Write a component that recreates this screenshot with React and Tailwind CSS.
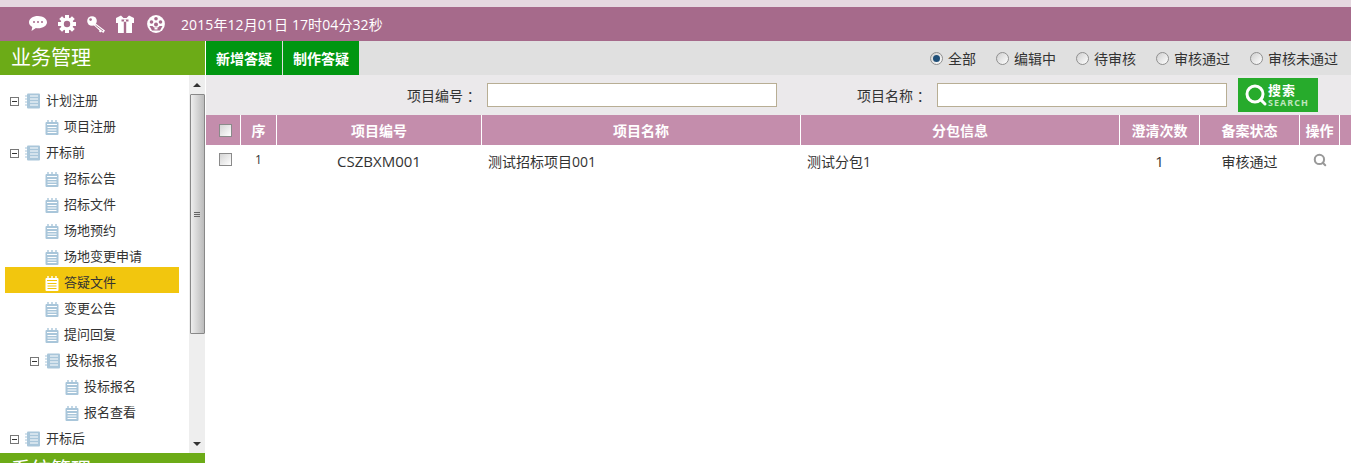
import React from 'react';
import { Search } from 'lucide-react';

const FONT = "font-['Open_Sans','Noto_Sans_CJK_SC',sans-serif]";

const treeItems = [
  { label: '计划注册', level: 0, folder: true },
  { label: '项目注册', level: 1 },
  { label: '开标前', level: 0, folder: true },
  { label: '招标公告', level: 1 },
  { label: '招标文件', level: 1 },
  { label: '场地预约', level: 1 },
  { label: '场地变更申请', level: 1 },
  { label: '答疑文件', level: 1, active: true },
  { label: '变更公告', level: 1 },
  { label: '提问回复', level: 1 },
  { label: '投标报名', level: 2, folder: true },
  { label: '投标报名', level: 3 },
  { label: '报名查看', level: 3 },
  { label: '开标后', level: 0, folder: true },
];

const radios = [
  { label: '全部', checked: true },
  { label: '编辑中' },
  { label: '待审核' },
  { label: '审核通过' },
  { label: '审核未通过' },
];

const ChatIcon = () => (
  <svg width="18" height="16" viewBox="0 0 18 16">
    <path fill="#fff" d="M9 0C4 0 0 2.700 0 6.200c0 2 1.300 3.700 3.300 4.800L2.500 15l4.400-3c.7.100 1.400.2 2.100.2 5 0 9-2.600 9-6S14 0 9 0z" />
    <circle cx="5" cy="6" r="1" fill="#a66a8b" />
    <circle cx="9" cy="6" r="1" fill="#a66a8b" />
    <circle cx="13" cy="6" r="1" fill="#a66a8b" />
  </svg>
);

const GearIcon = () => (
  <svg width="18" height="18" viewBox="0 0 18 18">
    <g fill="#fff">
      <rect x="7" y="0" width="4" height="18" />
      <rect x="7" y="0" width="4" height="18" transform="rotate(45 9 9)" />
      <rect x="7" y="0" width="4" height="18" transform="rotate(90 9 9)" />
      <rect x="7" y="0" width="4" height="18" transform="rotate(135 9 9)" />
      <circle cx="9" cy="9" r="6.500" />
    </g>
    <circle cx="9" cy="9" r="3.200" fill="#a66a8b" />
  </svg>
);

const KeyIcon = () => (
  <svg width="18" height="17" viewBox="0 0 18 17">
    <circle cx="5" cy="5" r="4.800" fill="#fff" />
    <circle cx="3.600" cy="3.600" r="1.300" fill="#a66a8b" />
    <path fill="#fff" d="M8 7l10 7.500-1.700 2.500-2-1.400-.9 1-1.400-1.100.5-1.100L6.500 9z" />
    <path stroke="#a66a8b" strokeWidth="0.900" d="M8.500 9.200l7.500 5.800" />
  </svg>
);

const GiftIcon = () => (
  <svg width="18" height="18" viewBox="0 0 18 18">
    <path fill="#fff" d="M0 3l5-2.500L7.500 3h3L13 .5 18 3v5h-2v10H2V8H0z" />
    <rect x="7.800" y="7" width="2.400" height="11" fill="#a66a8b" />
    <rect x="5.500" y="4.500" width="7" height="2" fill="#a66a8b" />
    <rect x="8" y="4.500" width="2" height="2" fill="#fff" />
  </svg>
);

const BuoyIcon = () => (
  <svg width="18" height="18" viewBox="0 0 18 18">
    <circle cx="9" cy="9" r="8.900" fill="#fff" />
    <circle cx="4.500" cy="7" r="1.800" fill="#a66a8b" />
    <circle cx="13.500" cy="7" r="1.800" fill="#a66a8b" />
    <circle cx="9" cy="3.700" r="1.800" fill="#a66a8b" />
    <circle cx="9" cy="9.500" r="2" fill="#a66a8b" />
    <path fill="#a66a8b" d="M2.500 11h3l1.500 1.500h4L12.500 11h3L13 15.500H5z" />
    <rect x="7.500" y="12.500" width="3" height="2" fill="#fff" />
  </svg>
);

const FolderIcon = () => (
  <svg width="16" height="16" viewBox="0 0 16 16" className="shrink-0">
    <rect x="2" y="0.500" width="13" height="15" rx="1" fill="#a9c6da" />
    <path d="M0 3h4M0 6h4M0 9h4M0 12h4" stroke="#a9c6da" strokeWidth="1" />
    <path d="M5 3h8M5 6h8M5 9h8M5 12h8" stroke="#fff" strokeWidth="1" />
  </svg>
);

const NoteIcon = ({ active }) => {
  const color = active ? '#fff' : '#a9c6da';
  const inner = active ? '#f2c60e' : '#fff';
  return (
    <svg width="14" height="15" viewBox="0 0 14 15" className="shrink-0">
      <rect x="0.500" y="2" width="13" height="13" rx="1" fill={color} />
      <path d="M3 0v3M7 0v3M11 0v3" stroke={color} strokeWidth="1.400" />
      <path d="M2 4.500h10" stroke={inner} strokeWidth="1" />
      <path d="M2.500 7.500h9M2.500 10h9M2.500 12.500h9" stroke={inner} strokeWidth="1" />
    </svg>
  );
};

const Toggle = () => (
  <span className="flex h-[9px] w-[9px] shrink-0 items-center justify-center border border-[#777] bg-white">
    <span className="h-px w-[5px] bg-[#333]" />
  </span>
);

const TreeRow = ({ item }) => {
  const indent = { 0: 'pl-[5px]', 1: 'pl-[40px]', 2: 'pl-[25px]', 3: 'pl-[60px]' }[item.level];
  return (
    <div className={`flex h-[26px] items-center pt-[6px] text-[13px] text-[#333] ${indent} ${item.active ? 'bg-[#f2c60e]' : ''}`}>
      {item.folder && <Toggle />}
      {item.folder ? <span className="ml-[6px]"><FolderIcon /></span> : <NoteIcon active={item.active} />}
      <span className="ml-[5px]">{item.label}</span>
    </div>
  );
};

const ScrollArrow = ({ up }) => (
  <div className="flex h-[19px] items-center justify-center">
    <div className={`h-0 w-0 border-x-[4px] border-x-transparent ${up ? 'border-b-[4px] border-b-[#333]' : 'border-t-[4px] border-t-[#333]'}`} />
  </div>
);

const Scrollbar = () => (
  <div className="flex h-full w-[16px] flex-col bg-[#eeeeee]">
    <ScrollArrow up />
    <div className="mx-auto flex h-[240px] w-[15px] items-center justify-center rounded-[1px] border border-[#888] bg-gradient-to-r from-[#eeeeee] to-[#bbbbbb]">
      <div className="flex flex-col gap-px">
        <div className="h-px w-[6px] bg-[#666]" />
        <div className="h-px w-[6px] bg-[#666]" />
        <div className="h-px w-[6px] bg-[#666]" />
      </div>
    </div>
    <div className="flex-1" />
    <ScrollArrow />
  </div>
);

const Checkbox = () => (
  <span className="block h-[13px] w-[13px] border border-[#8a8a8a] bg-gradient-to-br from-[#d4d4d4] to-white" />
);

const Radio = ({ label, checked }) => (
  <label className="ml-[20px] flex items-center gap-[5px] pt-px first:ml-0">
    <span className="flex h-[13px] w-[13px] items-center justify-center rounded-full border border-[#8f8f8f] bg-gradient-to-br from-[#cfcfcf] to-white">
      {checked && <span className="h-[7px] w-[7px] rounded-full bg-[#1f4f78]" />}
    </span>
    <span>{label}</span>
  </label>
);

const headers = [
  { label: '序', w: 'w-[36px]' },
  { label: '项目编号', w: 'w-[205px]' },
  { label: '项目名称', w: 'w-[319px]' },
  { label: '分包信息', w: 'w-[319px]' },
  { label: '澄清次数', w: 'w-[80px]' },
  { label: '备案状态', w: 'w-[100px]' },
  { label: '操作', w: 'w-[40px]' },
];

export default function App() {
  return (
    <div className={`flex h-[463px] w-[1351px] flex-col overflow-hidden bg-white ${FONT}`}>
      <div className="h-[7px] bg-[#e5d8e0]" />

      {/* top bar */}
      <div className="flex h-[34px] items-center bg-[#a66a8b] pl-[29px] text-[14px] text-white">
        <div className="flex items-center gap-[11px]">
          <ChatIcon />
          <GearIcon />
          <KeyIcon />
          <GiftIcon />
          <span className="ml-[2px]"><BuoyIcon /></span>
        </div>
        <span className="ml-[16px] tracking-[0.1px]">2015年12月01日 17时04分32秒</span>
      </div>

      <div className="flex min-h-0 flex-1">
        {/* sidebar */}
        <div className="flex w-[205px] shrink-0 flex-col">
          <div className="flex h-[34px] items-center bg-[#6cab17] pl-[11px] text-[20px] leading-none text-white">业务管理</div>
          <div className="flex h-[378px] bg-white">
            <div className="w-[189px] pt-[10px] pl-[5px] pr-[10px]">
              {treeItems.map((item, i) => (
                <TreeRow key={i} item={item} />
              ))}
            </div>
            <Scrollbar />
          </div>
          <div className="h-[10px] overflow-hidden bg-[#6cab17] pt-[7px] pl-[11px] text-[20px] leading-[20px] text-white">
            系统管理
          </div>
        </div>

        {/* main */}
        <div className="ml-px flex min-w-0 flex-1 flex-col">
          <div className="flex h-[34px] items-stretch bg-[#e0e0e0]">
            <button className="w-[76px] bg-[#009611] text-[14px] font-bold text-white">新增答疑</button>
            <button className="ml-px w-[76px] bg-[#009611] text-[14px] font-bold text-white">制作答疑</button>
            <div className="ml-auto flex items-center pr-[13px] text-[14px] text-[#333]">
              {radios.map((r) => (
                <Radio key={r.label} label={r.label} checked={r.checked} />
              ))}
            </div>
          </div>

          <div className="flex h-[40px] items-center bg-[#ebe9eb] text-[14px] text-[#333]">
            <span className="ml-[201px] w-[80px]">项目编号 ：</span>
            <input className="h-[24px] w-[290px] border border-[#b8ae94] bg-white" />
            <span className="ml-[80px] w-[80px]">项目名称 ：</span>
            <input className="h-[24px] w-[290px] border border-[#b8ae94] bg-white" />
            <button className="ml-[11px] flex h-[34px] w-[80px] items-center bg-[#27ab2c] pl-[6px] text-white">
              <Search size={24} strokeWidth={3} />
              <span className="flex flex-col items-start gap-px leading-none">
                <span className="text-[13px] leading-[13px] font-bold tracking-[1px]">搜索</span>
                <span className="text-[9px] leading-[9px] font-bold tracking-[1px] text-[#bfe6bf]">SEARCH</span>
              </span>
            </button>
          </div>

          <div className="flex h-[30px] bg-[#c48dac] text-[14px] font-bold text-white">
            <div className="flex w-[34px] items-center pt-px pl-[13px]">
              <Checkbox />
            </div>
            {headers.map((h) => (
              <div key={h.label} className={`flex shrink-0 items-center justify-center border-l border-white ${h.w}`}>
                {h.label}
              </div>
            ))}
            <div className="flex-1 border-l border-white" />
          </div>

          <div className="flex h-[32px] items-center text-[14px] text-[#333]">
            <div className="flex w-[34px] pb-[3px] pl-[13px]">
              <Checkbox />
            </div>
            <div className="ml-px w-[35px] pb-[2px] text-center text-[12px]">1</div>
            <div className="ml-px w-[204px] text-center text-[15px]">CSZBXM001</div>
            <div className="ml-px w-[318px] pl-[6px]">测试招标项目001</div>
            <div className="ml-px w-[318px] pl-[6px]">测试分包1</div>
            <div className="ml-px w-[79px] text-center text-[15px]">1</div>
            <div className="ml-px w-[99px] text-center">审核通过</div>
            <div className="ml-px flex w-[39px] justify-center pb-[3px] text-[#999]">
              <Search size={14} strokeWidth={3.500} />
            </div>
          </div>
        </div>
      </div>
    </div>
  );
}
